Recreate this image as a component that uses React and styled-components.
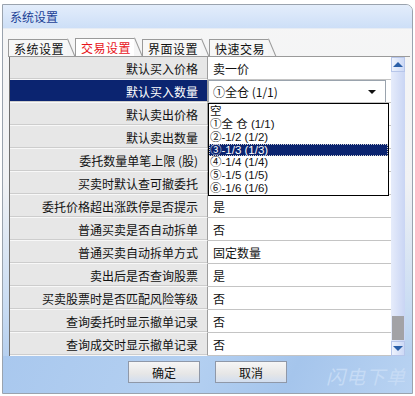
import styled, { createGlobalStyle } from "styled-components";

const GlobalStyle = createGlobalStyle`
  body {
    margin: 0;
    background: #ffffff;
    font-family: "Noto Sans CJK SC", "DejaVu Sans", sans-serif;
  }
`;

const rows = [
  { label: "默认买入价格", value: "卖一价" },
  { label: "默认买入数量", value: "①全仓 (1/1)", selected: true },
  { label: "默认卖出价格", value: "" },
  { label: "默认卖出数量", value: "" },
  { label: "委托数量单笔上限 (股)", value: "" },
  { label: "买卖时默认查可撤委托", value: "" },
  { label: "委托价格超出涨跌停是否提示", value: "是" },
  { label: "普通买卖是否自动拆单", value: "否" },
  { label: "普通买卖自动拆单方式", value: "固定数量" },
  { label: "卖出后是否查询股票", value: "是" },
  { label: "买卖股票时是否匹配风险等级", value: "否" },
  { label: "查询委托时显示撤单记录", value: "否" },
  { label: "查询成交时显示撤单记录", value: "否" },
];

const options = [
  "空",
  "①全 仓 (1/1)",
  "②-1/2 (1/2)",
  "③-1/3 (1/3)",
  "④-1/4 (1/4)",
  "⑤-1/5 (1/5)",
  "⑥-1/6 (1/6)",
];

const tabs = ["系统设置", "交易设置", "界面设置", "快速交易"];

const App = () => {
  return (
    <>
      <GlobalStyle />
      <Window>
        <TitleBar>系统设置</TitleBar>
        <Body>
          <TabRow>
            {tabs.map((t, i) => (
              <Tab key={t} $active={i === 1}>
                {t}
              </Tab>
            ))}
          </TabRow>
          <GridWrap>
            <Table>
              {rows.map((r) => (
                <Row key={r.label}>
                  <Label $selected={r.selected}>{r.label}</Label>
                  <Value>
                    {r.selected ? (
                      <Combo>
                        <span>{r.value}</span>
                        <Arrow />
                      </Combo>
                    ) : (
                      r.value
                    )}
                  </Value>
                </Row>
              ))}
              <Dropdown>
                {options.map((o, i) => (
                  <Option key={o} $selected={i === 3}>
                    {o}
                  </Option>
                ))}
              </Dropdown>
            </Table>
            <ScrollBar>
              <ScrollButton>
                <Tri $up />
              </ScrollButton>
              <Track>
                <Thumb />
              </Track>
              <ScrollButton>
                <Tri />
              </ScrollButton>
            </ScrollBar>
          </GridWrap>
          <Footer>
            <Button>确定</Button>
            <Button>取消</Button>
            <Watermark>闪电下单</Watermark>
          </Footer>
        </Body>
      </Window>
    </>
  );
};

const Window = styled.div`
  margin: 4px 0 0 2px;
  width: 409px;
  height: 388px;
  border: 1px solid #9aa3ae;
  border-radius: 0 7px 0 0;
  display: flex;
  flex-direction: column;
  overflow: hidden;
  background: linear-gradient(
    to bottom,
    #f6f6f6 0%,
    #f1f2f4 45%,
    #c9dcf3 78%,
    #a8c7ec 100%
  );
`;

const TitleBar = styled.div`
  height: 23px;
  display: flex;
  align-items: center;
  padding-left: 7px;
  font-size: 12px;
  color: #1b3f96;
  background: linear-gradient(to bottom, #e3edfb, #cddff7);
  border-bottom: 1px solid #e6ecf4;
`;

const Body = styled.div`
  flex: 1;
  display: flex;
  flex-direction: column;
  padding: 8px 7px 0 5px;
`;

const TabRow = styled.div`
  display: flex;
  align-items: flex-end;
  height: 19px;
  border-bottom: 1px solid #9a9a9a;
  margin-right: -5px;
`;

const Tab = styled.div`
  position: relative;
  height: ${({ $active }) => ($active ? "18px" : "17px")};
  box-sizing: border-box;
  padding: 0 3px 0 5px;
  margin-right: 8px;
  font-size: 12px;
  line-height: 17px;
  color: ${({ $active }) => ($active ? "#e8141b" : "#111")};
  background: ${({ $active }) => ($active ? "#ffffff" : "#f7f7f7")};
  border-top: 1px solid #9a9a9a;
  border-left: 1px solid #9a9a9a;
  letter-spacing: 0.5px;

  &::after {
    content: "";
    position: absolute;
    right: -1px;
    top: -1px;
    width: 1px;
    height: 20px;
    background: #9a9a9a;
    transform: rotate(-23deg);
    transform-origin: top left;
  }
`;

const GridWrap = styled.div`
  display: flex;
  margin-left: 1px;
  height: 299px;
  border-left: 1px solid #6f6f6f;
`;

const Table = styled.div`
  position: relative;
  width: 381px;
  display: flex;
  flex-direction: column;
  background: #ffffff;
`;

const Row = styled.div`
  display: grid;
  grid-template-columns: 198px 1fr;
  height: 23px;
`;

const Label = styled.div`
  display: flex;
  align-items: center;
  justify-content: flex-end;
  padding-right: 9px;
  font-size: 12px;
  color: ${({ $selected }) => ($selected ? "#ffffff" : "#111")};
  background: ${({ $selected }) => ($selected ? "#0b2470" : "#e7e7e7")};
  border-bottom: 1px solid #f8f8f8;
  border-right: 1px solid #9e9e9e;
  box-shadow: inset 0 -1px 0 #cdcdcd;
  white-space: pre;
`;

const Value = styled.div`
  display: flex;
  align-items: center;
  padding-left: 5px;
  font-size: 12px;
  color: #111;
  border-bottom: 1px solid #c4c4c4;
`;

const Combo = styled.div`
  margin-left: -5px;
  width: 100%;
  height: 22px;
  box-sizing: border-box;
  display: flex;
  align-items: center;
  justify-content: space-between;
  padding: 0 9px 0 4px;
  border: 1px solid #9aa3ad;
  border-bottom: none;
  background: #fff;
`;

const Arrow = styled.span`
  width: 0;
  height: 0;
  border-left: 4px solid transparent;
  border-right: 4px solid transparent;
  border-top: 4px solid #111;
`;

const Dropdown = styled.div`
  position: absolute;
  top: 46px;
  left: 198px;
  width: 181px;
  height: 93px;
  box-sizing: border-box;
  border: 1px solid #000;
  background: #fff;
  display: flex;
  flex-direction: column;
  padding-top: 1px;
`;

const Option = styled.div`
  height: 13px;
  line-height: 13px;
  overflow: hidden;
  font-family: "Liberation Sans", "Noto Sans CJK SC", sans-serif;
  font-size: 11.5px;
  padding-left: 1px;
  white-space: pre;
  color: ${({ $selected }) => ($selected ? "#ffffff" : "#111")};
  background: ${({ $selected }) => ($selected ? "#0b2470" : "transparent")};
  outline: ${({ $selected }) => ($selected ? "1px dotted #d0d0d0" : "none")};
  outline-offset: -1px;
`;

const ScrollBar = styled.div`
  width: 14px;
  display: flex;
  flex-direction: column;
  background: linear-gradient(to right, #e6ecfb, #c9d5f4);
`;

const ScrollButton = styled.div`
  height: 15px;
  display: flex;
  align-items: center;
  justify-content: center;
  background: linear-gradient(to right, #eef3fd, #cdd9f6);
  border: 1px solid #b7c6ea;
  box-sizing: border-box;
`;

const Tri = styled.span`
  width: 0;
  height: 0;
  border-left: 5px solid transparent;
  border-right: 5px solid transparent;
  ${({ $up }) =>
    $up ? "border-bottom: 5px solid #2a5fa8;" : "border-top: 5px solid #2a5fa8;"}
`;

const Track = styled.div`
  flex: 1;
  display: flex;
  flex-direction: column;
  justify-content: flex-end;
`;

const Thumb = styled.div`
  height: 24px;
  margin: 0 1px 1px;
  background: #a2a2a6;
`;

const Footer = styled.div`
  position: relative;
  flex: 1;
  display: flex;
  align-items: flex-start;
  justify-content: center;
  gap: 15px;
  padding-top: 5px;
  margin: 0 -7px 0 -5px;
  background: linear-gradient(115deg, #a9c8ee 0%, #b4d0f1 45%, #a5c5ec 70%, #b9d3f2 100%);
`;

const Button = styled.div`
  width: 72px;
  height: 22px;
  box-sizing: border-box;
  display: flex;
  align-items: center;
  justify-content: center;
  font-size: 12px;
  color: #111;
  border: 1px solid #8f98a8;
  background: linear-gradient(to bottom, #f6f6f6, #e6e6e6 60%, #d2def0);
`;

const Watermark = styled.div`
  position: absolute;
  right: 6px;
  top: 6px;
  font-size: 19px;
  font-style: italic;
  color: #c6dbf5;
  letter-spacing: 1px;
`;

export default App;
